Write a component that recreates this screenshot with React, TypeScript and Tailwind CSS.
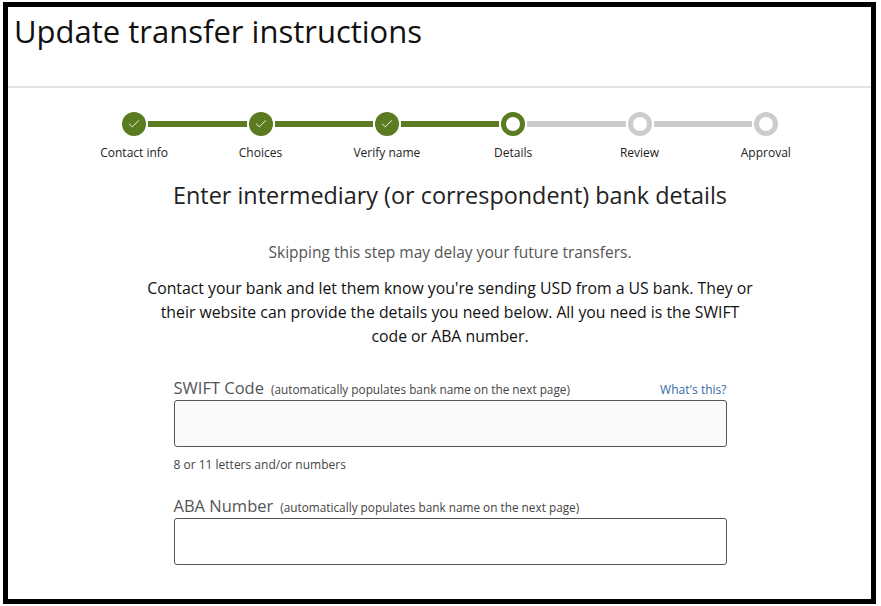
import { Check } from 'lucide-react'

const steps = [
  { label: 'Contact info', state: 'done' },
  { label: 'Choices', state: 'done' },
  { label: 'Verify name', state: 'done' },
  { label: 'Details', state: 'current' },
  { label: 'Review', state: 'todo' },
  { label: 'Approval', state: 'todo' },
]

const GREEN = 'bg-[#5a7b20]'

function Stepper() {
  return (
    <div className="grid grid-cols-6 w-[758px] mx-auto">
      {steps.map((step, i) => {
        const leftOn = i > 0 && steps[i].state !== 'todo'
        const rightOn = i < steps.length - 1 && steps[i + 1].state !== 'todo'
        return (
          <div key={step.label} className="flex flex-col items-center">
            <div className="flex items-center w-full h-[24px]">
              <div className={`flex-1 h-[6px] ${i === 0 ? '' : leftOn ? GREEN : 'bg-[#cccccc]'}`} />
              {step.state === 'done' && (
                <div className="w-[24px] h-[24px] rounded-full bg-[#5a7b20] flex items-center justify-center mx-[2px]">
                  <Check size={14} strokeWidth={1.5} className="text-white" />
                </div>
              )}
              {step.state === 'current' && (
                <div className="w-[24px] h-[24px] rounded-full bg-white border-[5px] border-[#5a7b20] mx-[2px]" />
              )}
              {step.state === 'todo' && (
                <div className="w-[24px] h-[24px] rounded-full bg-white border-[5px] border-[#cccccc] mx-[2px]" />
              )}
              <div className={`flex-1 h-[6px] ${i === steps.length - 1 ? '' : rightOn ? GREEN : 'bg-[#cccccc]'}`} />
            </div>
            <div className="mt-[9px] text-[12px] leading-[16px] text-[#222]">{step.label}</div>
          </div>
        )
      })}
    </div>
  )
}

function Field({ label, hint, help, shaded }: { label: string; hint: string; help?: boolean; shaded?: boolean }) {
  return (
    <div>
      <div className="flex items-baseline h-[22px] leading-[22px]">
        <span className="text-[16.5px] text-[#555]">{label}</span>
        <span className="ml-[7px] text-[11.8px] text-[#444]">{hint}</span>
        {help && <span className="ml-auto text-[12px] text-[#2f6aa3]">What's this?</span>}
      </div>
      <div className={`mt-[1px] h-[47px] rounded-[3px] border border-[#555] ${shaded ? 'bg-[#fafafa]' : 'bg-white'}`} />
    </div>
  )
}

export default function App() {
  return (
    <div className="w-[881px] h-[606px] bg-white pt-[2px] pl-[3px] font-['Open_Sans',sans-serif]">
      <div className="w-[873px] h-[602px] border-[5px] border-black flex flex-col overflow-hidden">
        <div className="h-[81px] border-b-2 border-[#e4e4e4] px-[6px] pt-[4px]">
          <h1 className="text-[31px] leading-[40px] text-[#111]">Update transfer instructions</h1>
        </div>

        <div className="pl-[21px] pt-[24px]">
          <Stepper />

          <div className="w-[700px] mx-auto text-center">
            <h2 className="mt-[20px] text-[23.4px] leading-[28px] text-[#222]">
              Enter intermediary (or correspondent) bank details
            </h2>
            <p className="mt-[31px] text-[15.5px] leading-[24px] text-[#555]">
              Skipping this step may delay your future transfers.
            </p>
            <p className="mt-[12px] w-[610px] mx-auto text-[15.8px] leading-[24px] text-[#111]">
              Contact your bank and let them know you're sending USD from a US bank. They or their website can provide the details you need below. All you need is the SWIFT code or ABA number.
            </p>
          </div>

          <div className="w-[553px] mx-auto mt-[29px]">
            <Field label="SWIFT Code" hint="(automatically populates bank name on the next page)" help shaded />
            <div className="mt-[9px] text-[12px] text-[#444]">8 or 11 letters and/or numbers</div>
            <div className="mt-[21px]">
              <Field label="ABA Number" hint="(automatically populates bank name on the next page)" />
            </div>
          </div>
        </div>
      </div>
    </div>
  )
}
